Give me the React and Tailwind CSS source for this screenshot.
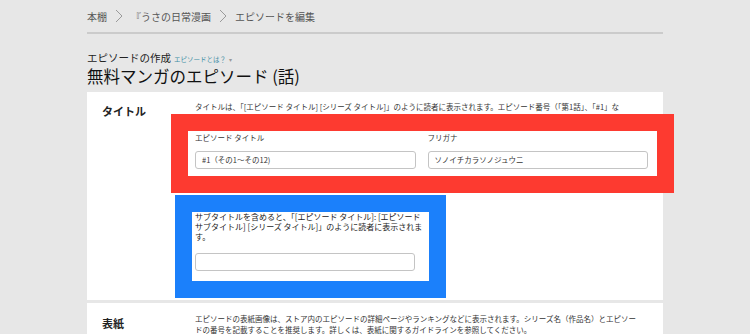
import React from "react";

const Chevron = () => (
  <svg width="8" height="14" viewBox="0 0 8 14" className="mx-[8px] shrink-0">
    <polyline points="1,1 7,7 1,13" fill="none" stroke="#9a9a9a" strokeWidth="1" />
  </svg>
);

const Input = ({ value }) => (
  <div className="h-[18px] border border-[#c4c4c4] rounded-[3px] bg-white flex items-center pl-[6px] text-[7.5px] text-[#333]">
    {value}
  </div>
);

export default function App() {
  return (
    <div
      className="w-[750px] h-[334px] bg-[#e7e7e7] overflow-hidden"
      style={{ fontFamily: '"Noto Sans CJK JP", "Noto Sans", sans-serif' }}
    >
      <div className="mx-auto w-[576px]">
        <div className="h-[32px] flex items-center text-[10px] text-[#555]">
          <span>本棚</span>
          <Chevron />
          <span>『うさの日常漫画</span>
          <Chevron />
          <span>エピソードを編集</span>
        </div>
        <div className="h-[2px] bg-[#cbcbcb]" />
        <div className="mt-[17px] flex items-baseline h-[14px] leading-[14px]">
          <span className="text-[10.5px] text-[#222]">エピソードの作成</span>
          <span className="ml-[3px] text-[6.5px] text-[#3f8ea5]">エピソードとは？</span>
          <span className="ml-[3px] text-[6px] text-[#999]">▾</span>
        </div>
        <div className="mt-[1px] text-[16.5px] leading-[21px] text-[#111]">無料マンガのエピソード (話)</div>

        <div className="mt-[5px] bg-white flex pb-[2px]">
          <div className="w-[84px] shrink-0 pl-[15px] pt-[12px] text-[11px] leading-[14px] font-bold text-[#222]">
            タイトル
          </div>
          <div className="flex-1 pt-[10px]">
            <p className="ml-[24px] text-[7.5px] leading-[10px] text-[#333] whitespace-nowrap">
              タイトルは、「[エピソード タイトル] [シリーズ タイトル]」のように読者に表示されます。エピソード番号（「第1話」、「#1」な
            </p>
            <div className="mt-[2px] w-[503px] border-[17px] border-[#fd3a30] bg-white">
              <div className="pl-[7px] pr-[9px] pt-[2px] pb-[7px] grid grid-cols-2 gap-x-[12px]">
                <div>
                  <div className="text-[7.5px] leading-[10px] text-[#333]">エピソード タイトル</div>
                  <div className="mt-[8px]">
                    <Input value="#1（その1〜その12)" />
                  </div>
                </div>
                <div>
                  <div className="text-[7.5px] leading-[10px] text-[#333]">フリガナ</div>
                  <div className="mt-[8px]">
                    <Input value="ソノイチカラソノジュウニ" />
                  </div>
                </div>
              </div>
            </div>
            <div className="mt-[2px] ml-[4px] w-[271px] border-[17px] border-[#1b80fb] bg-white">
              <div className="pl-[3px] pr-[14px] pb-[10px]">
                <p className="text-[8px] leading-[10px] text-[#222] whitespace-nowrap">
                  サブタイトルを含めると、「[エピソード タイトル]: [エピソード
                  <br />
                  サブタイトル] [シリーズ タイトル]」のように読者に表示されま
                  <br />
                  す。
                </p>
                <div className="mt-[11px]">
                  <Input value="" />
                </div>
              </div>
            </div>
          </div>
        </div>

        <div className="mt-[3px] bg-white flex h-[40px]">
          <div className="w-[84px] shrink-0 pl-[15px] pt-[13px] text-[11px] leading-[14px] font-bold text-[#222]">
            表紙
          </div>
          <div className="flex-1 pt-[10px]">
            <p className="ml-[24px] text-[7.5px] leading-[11px] text-[#333] whitespace-nowrap">
              エピソードの表紙画像は、ストア内のエピソードの詳細ページやランキングなどに表示されます。シリーズ名（作品名）とエピソー
              <br />
              ドの番号を記載することを推奨します。詳しくは、表紙に関するガイドラインを参照してください。
            </p>
          </div>
        </div>
      </div>
    </div>
  );
}
